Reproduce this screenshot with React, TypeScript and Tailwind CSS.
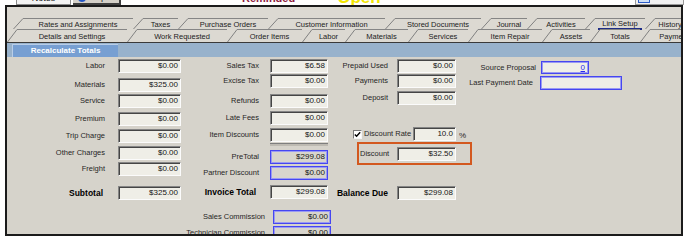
import React from "react";

const font = "font-['Liberation_Sans',Arial,sans-serif]";

type Kind = "inset" | "blue" | "blueLight";

function Box({ value, className = "", kind = "inset" }: { value?: React.ReactNode; className?: string; kind?: Kind }) {
  const look =
    kind === "inset"
      ? "bg-[#efeee7] border border-t-[#858585] border-l-[#858585] border-r-[#fbfbfb] border-b-[#fbfbfb] shadow-[inset_1px_1px_0_#454545]"
      : kind === "blue"
        ? "bg-[#d8d5cd] border border-[#4646f0] shadow-[inset_0_0_0_1px_#9a9af3]"
        : "bg-[#efeee7] border border-[#4646f0] shadow-[inset_0_0_0_1px_#9a9af3]";
  return (
    <div className={`flex shrink-0 items-center justify-end pr-[2px] text-[8px] text-[#151515] ${look} ${className}`}>
      {value}
    </div>
  );
}

function Row({
  label,
  value,
  lw,
  fw,
  gap,
  mt,
  bold,
  kind,
  h = "h-[14px]",
}: {
  label: string;
  value?: React.ReactNode;
  lw: string;
  fw: string;
  gap: string;
  mt: string;
  bold?: boolean;
  kind?: Kind;
  h?: string;
}) {
  return (
    <div className={`flex items-center ${mt}`}>
      <div
        className={`${lw} shrink-0 whitespace-nowrap text-right ${
          bold ? "text-[8.5px] font-bold text-black" : "text-[7.5px] text-[#262626]"
        }`}
      >
        {label}
      </div>
      <Box className={`${gap} ${fw} ${h}`} value={value} kind={kind} />
    </div>
  );
}

function Tab({ label, w, tall }: { label: React.ReactNode; w: string; tall?: boolean }) {
  const h = tall ? 13 : 11;
  return (
    <div className={`flex shrink-0 ${w} ${tall ? "h-[13px]" : "h-[11px]"}`}>
      <svg className="shrink-0" width="10" height={h} viewBox={`0 0 10 ${h}`}>
        <path d={`M0.5 ${h} L10 0.5`} stroke="#808080" strokeWidth="1" fill="none" />
      </svg>
      <div
        className={`flex flex-1 justify-center whitespace-nowrap border-t border-[#858585] text-[7.5px] text-[#222] ${
          tall ? "items-center pt-[2px]" : "items-center pt-[1px]"
        }`}
      >
        {label}
      </div>
    </div>
  );
}

// only the lower edge of the toolbar above is in view
function TopStrip() {
  return (
    <div className="flex h-[5px] items-end overflow-hidden text-[#222]">
      <div className="ml-[16px] flex h-[12px] w-[55px] shrink-0 items-end justify-center border border-[#8a8a8a] bg-[#f3f3f3] pb-[1px] text-[9px] leading-[9px]">
        Notes
      </div>
      <div className="ml-[2px] flex h-[12px] w-[48px] shrink-0 items-end justify-center gap-[2px] border-b-2 border-r-2 border-[#3e3e3e] bg-[#d4d0c8] pb-[1px] text-[9px] leading-[9px]">
        <span className="inline-block h-[8px] w-[8px] rounded-full bg-[#2456c4]" />
        Map It
      </div>
      <div className="mb-[2px] ml-[121px] shrink-0 text-[11px] font-bold leading-[9px] text-[#8e1a40]">Reminded</div>
      <div className="mb-[1px] ml-[42px] shrink-0 text-[17px] font-bold leading-[12px] text-[#f2e600]">Open</div>
      <div className="ml-auto mr-[6px] flex h-[12px] w-[49px] shrink-0 items-end border border-[#9a9a9a] bg-[#f1f1f1] pb-[1px] pl-[2px]">
        <span className="h-[7px] w-[12px] border border-[#2a5bc6] bg-[#cfe0f7]" />
      </div>
    </div>
  );
}

function Tabs() {
  return (
    <div className="flex h-[35px] shrink-0 flex-col bg-[#dcd9d2] pt-[11px]">
      <div className="flex pl-[6px]">
        <Tab w="w-[120px]" label="Rates and Assignments" />
        <Tab w="w-[45px]" label="Taxes" />
        <Tab w="w-[90px]" label="Purchase Orders" />
        <Tab w="w-[117px]" label="Customer Information" />
        <Tab w="w-[96px]" label="Stored Documents" />
        <Tab w="w-[46px]" label="Journal" />
        <Tab w="w-[58px]" label="Activities" />
        <Tab
          w="w-[60px]"
          label={<span className="border-b-2 border-[#1f2d86] px-[4px] leading-[8px]">Link Setup</span>}
        />
        <Tab w="w-[40px]" label="History" />
      </div>
      <div className="flex">
        <Tab tall w="w-[120px]" label="Details and Settings" />
        <Tab tall w="w-[100px]" label="Work Requested" />
        <Tab tall w="w-[75px]" label="Order Items" />
        <Tab tall w="w-[43px]" label="Labor" />
        <Tab tall w="w-[63px]" label="Materials" />
        <Tab tall w="w-[60px]" label="Services" />
        <Tab tall w="w-[74px]" label="Item Repair" />
        <Tab tall w="w-[48px]" label="Assets" />
        <Tab tall w="w-[50px]" label="Totals" />
        <Tab tall w="w-[62px]" label="Payments" />
      </div>
    </div>
  );
}

function Main() {
  const c1 = { lw: "w-[98px]", gap: "ml-[13px]", fw: "w-[63px]" };
  const c2 = { lw: "w-[78px]", gap: "ml-[11px]", fw: "w-[58px]" };
  const c3 = { lw: "w-[60px]", gap: "ml-[9px]", fw: "w-[59px]" };
  return (
    <div className="flex flex-1 items-start">
      {/* charges */}
      <div className="flex w-[174px] shrink-0 flex-col">
        <Row {...c1} mt="mt-[2px]" label="Labor" value="$0.00" />
        <Row {...c1} mt="mt-[5px]" label="Materials" value="$325.00" />
        <Row {...c1} mt="mt-[2px]" label="Service" value="$0.00" />
        <Row {...c1} mt="mt-[4px]" label="Premium" value="$0.00" />
        <Row {...c1} mt="mt-[3px]" label="Trip Charge" value="$0.00" />
        <Row {...c1} mt="mt-[3px]" label="Other Charges" value="$0.00" />
        <Row {...c1} mt="mt-[2px]" label="Freight" value="$0.00" />
        <Row {...c1} lw="w-[98px] pr-[2px]" mt="mt-[10px]" bold label="Subtotal" value="$325.00" />
      </div>

      {/* taxes and invoice */}
      <div className="flex w-[147px] shrink-0 flex-col">
        <Row {...c2} mt="mt-[2px]" label="Sales Tax" value="$6.58" />
        <Row {...c2} mt="mt-[1px]" label="Excise Tax" value="$0.00" />
        <Row {...c2} mt="mt-[6px]" label="Refunds" value="$0.00" />
        <Row {...c2} mt="mt-[3px]" label="Late Fees" value="$0.00" />
        <Row {...c2} mt="mt-[3px]" label="Item Discounts" value="$0.00" />
        <div className="ml-[89px] mt-[1px] h-[3px] w-[58px] border-t border-[#7e7e7e] bg-[#bdbab2]" />
        <Row {...c2} mt="mt-[4px]" label="PreTotal" value="$299.08" kind="blue" />
        <Row {...c2} mt="mt-[2px]" label="Partner Discount" value="$0.00" kind="blue" />
        <Row {...c2} lw="w-[78px] pr-[3px]" mt="mt-[5px]" bold label="Invoice Total" value="$299.08" />
        <Row lw="w-[84px]" gap="ml-[8px]" fw="w-[58px]" mt="mt-[11px]" label="Sales Commission" value="$0.00" kind="blue" />
        <Row lw="w-[84px]" gap="ml-[8px]" fw="w-[58px]" mt="mt-[2px]" label="Technician Commission" value="$0.00" kind="blue" />
      </div>

      {/* payments */}
      <div className="flex w-[128px] shrink-0 flex-col">
        <Row {...c3} mt="mt-[2px]" label="Prepaid Used" value="$0.00" />
        <Row {...c3} mt="mt-[1px]" label="Payments" value="$0.00" />
        <Row {...c3} mt="mt-[3px]" label="Deposit" value="$0.00" />
        <div className="mt-[22px] flex h-[14px] items-center">
          <div className="ml-[25px] flex h-[9px] w-[9px] shrink-0 items-center justify-center border border-t-[#7a7a7a] border-l-[#7a7a7a] border-r-[#f5f5f5] border-b-[#f5f5f5] bg-white">
            <svg width="7" height="7" viewBox="0 0 7 7">
              <path d="M0.8 3.4 L2.6 5.3 L6.2 1.2" stroke="#000" strokeWidth="1.4" fill="none" />
            </svg>
          </div>
          <div className="ml-[2px] w-[48px] shrink-0 whitespace-nowrap text-[7.5px] text-[#262626]">Discount Rate</div>
          <Box className="ml-[1px] h-[14px] w-[43px]" value="10.0" />
          <div className="ml-[3px] mt-[3px] text-[8px] text-[#262626]">%</div>
        </div>
        <div className="ml-[29px] mt-[1px] flex h-[23px] w-[115px] shrink-0 items-center border-2 border-[#d3581f]">
          <div className="w-[38px] shrink-0 pl-[1px] text-[7.5px] text-[#262626]">Discount</div>
          <Box className="h-[14px] w-[59px]" value="$32.50" />
        </div>
        <Row {...c3} mt="mt-[21px]" bold label="Balance Due" value="$299.08" />
      </div>

      {/* source */}
      <div className="flex flex-1 flex-col">
        <Row
          lw="w-[80px]"
          gap="ml-[5px]"
          fw="w-[48px]"
          h="h-[13px]"
          mt="mt-[4px]"
          label="Source Proposal"
          kind="blueLight"
          value={<span className="pr-[1px] text-[#2a2af0] underline">0</span>}
        />
        <Row lw="w-[77px]" gap="ml-[7px]" fw="w-[82px]" mt="mt-[2px]" label="Last Payment Date" kind="blueLight" value="" />
      </div>
    </div>
  );
}

export default function App() {
  return (
    <div className={`h-[242px] w-[690px] overflow-hidden bg-white ${font}`}>
      <TopStrip />
      <div className="ml-[5px] flex h-[231px] w-[678px] flex-col overflow-hidden border-2 border-[#1b1b1b] bg-[#d6d3cb]">
        <Tabs />
        <div className="h-[1px] shrink-0 bg-[#3a3a3a]" />
        <div className="flex h-[14px] shrink-0 bg-[#98b2cc] pl-[5px]">
          <div className="mt-[1px] flex h-[13px] w-[106px] items-center justify-center border-l border-t border-[#b9cee8] bg-[#779fd2] text-[8px] font-bold text-white">
            Recalculate Totals
          </div>
        </div>
        <Main />
      </div>
    </div>
  );
}
